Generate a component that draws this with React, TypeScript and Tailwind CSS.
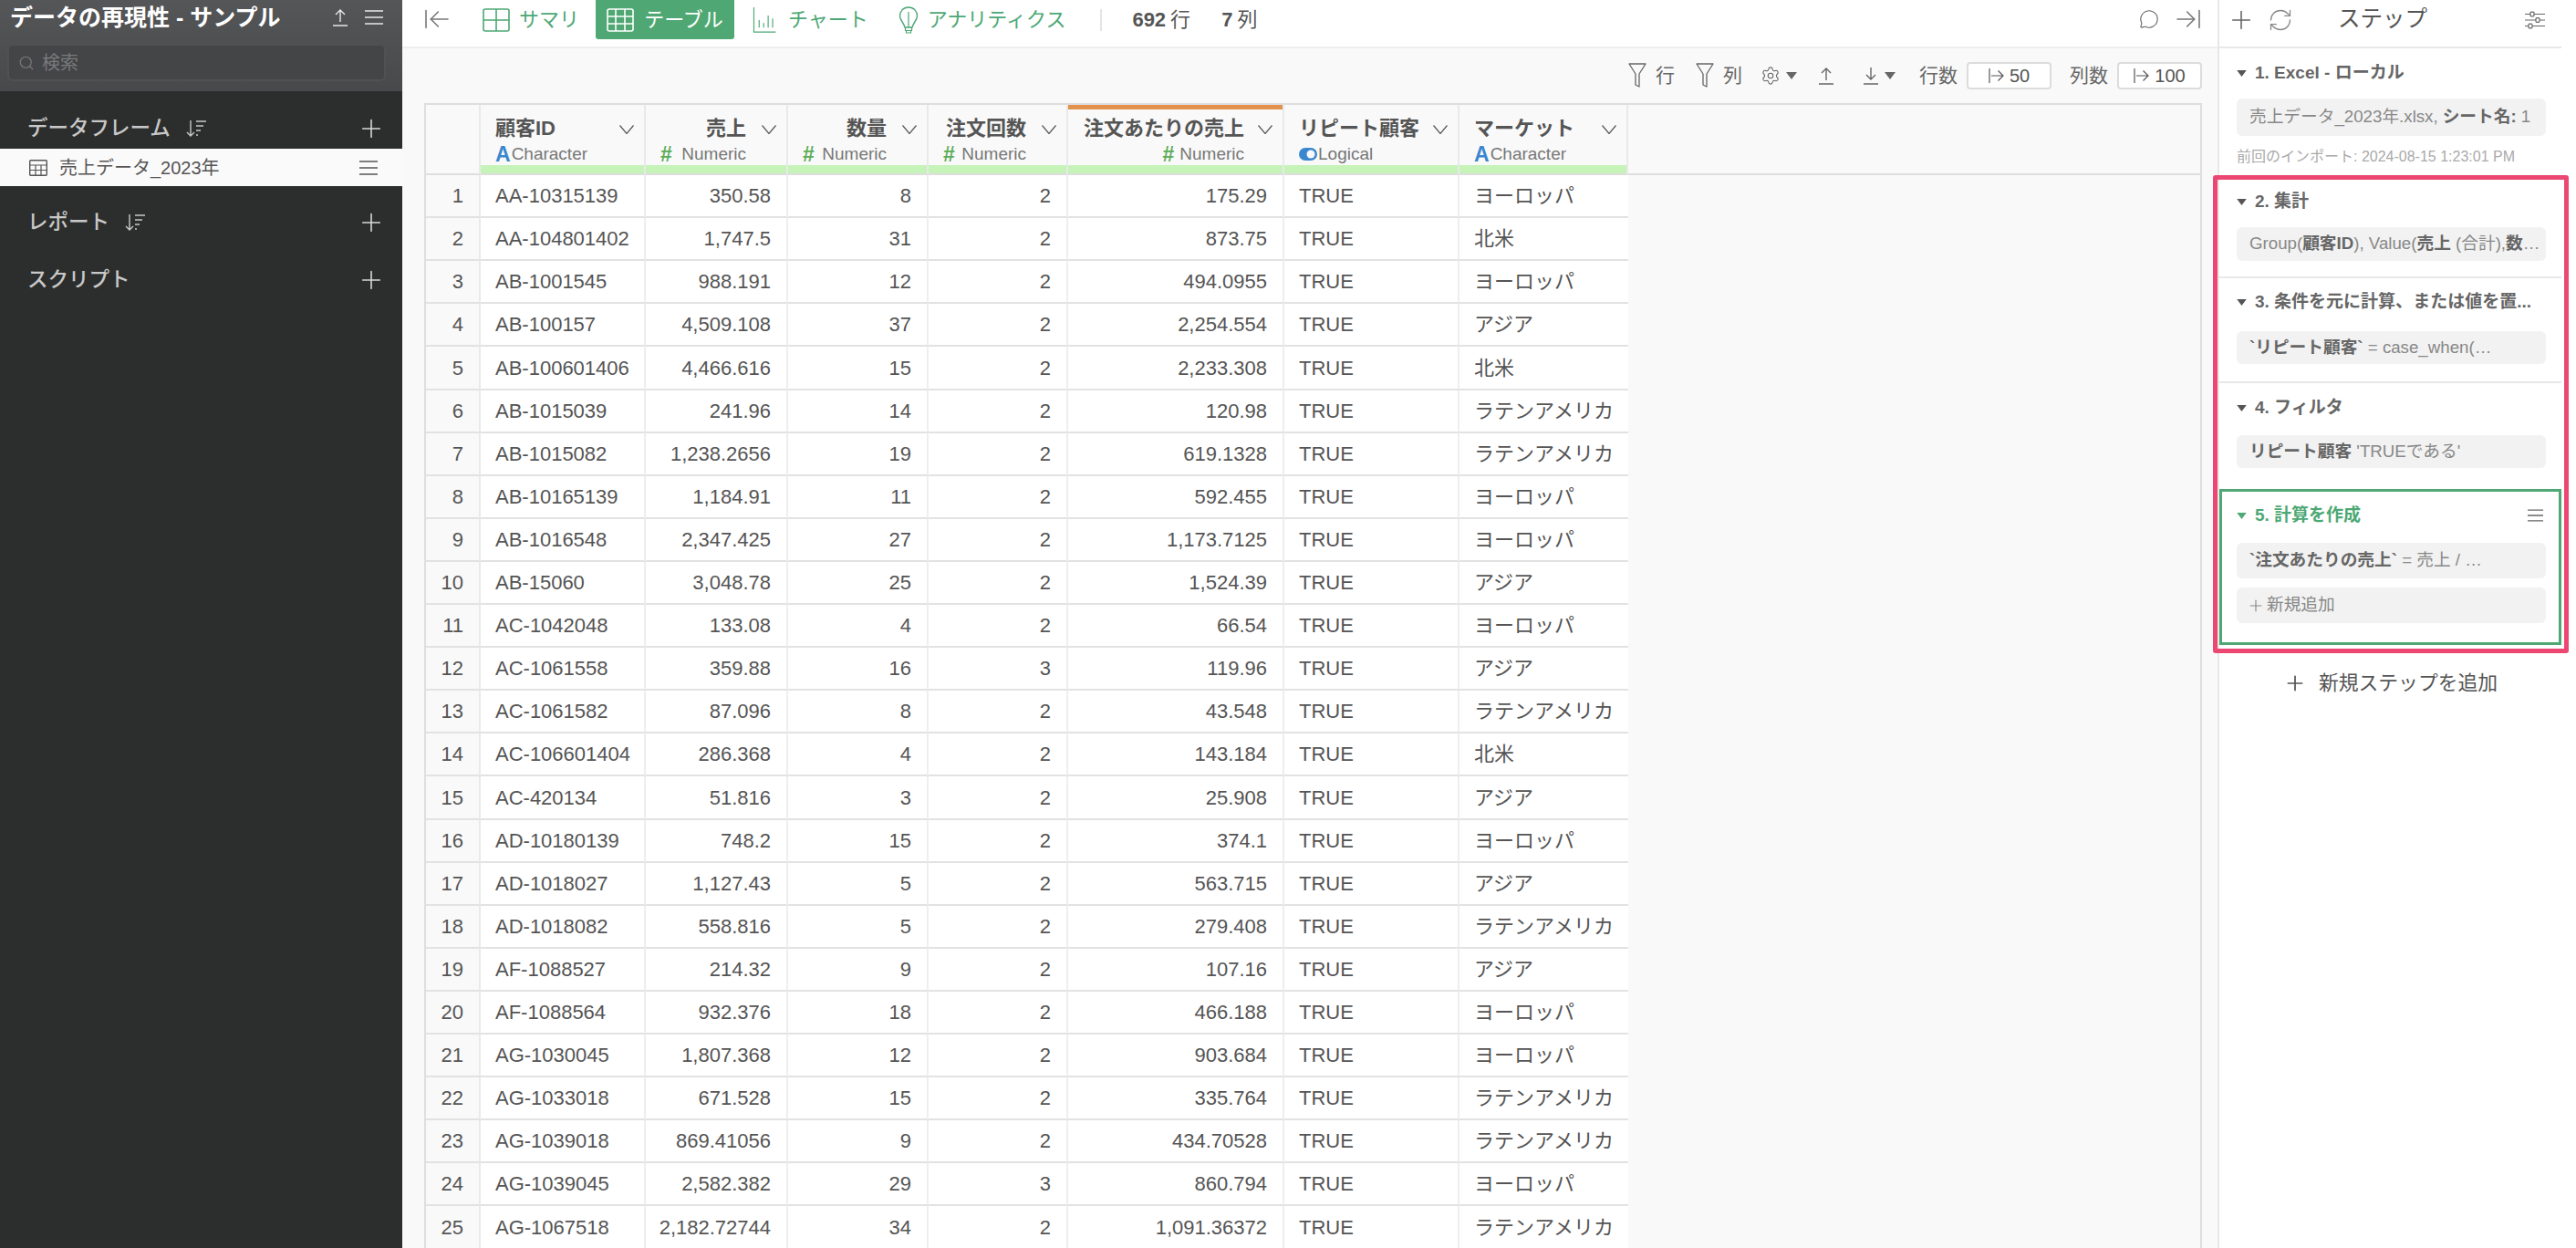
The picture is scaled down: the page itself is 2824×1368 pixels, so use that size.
import React from 'react';
import { ArrowLeftToLine, ArrowRightToLine, MessageCircle, Plus, RefreshCw, Search, Settings } from 'lucide-react';

const rows: [string, string, string, string, string, string][] = [
  ['AA-10315139', '350.58', '8', '2', '175.29', 'ヨーロッパ'],
  ['AA-104801402', '1,747.5', '31', '2', '873.75', '北米'],
  ['AB-1001545', '988.191', '12', '2', '494.0955', 'ヨーロッパ'],
  ['AB-100157', '4,509.108', '37', '2', '2,254.554', 'アジア'],
  ['AB-100601406', '4,466.616', '15', '2', '2,233.308', '北米'],
  ['AB-1015039', '241.96', '14', '2', '120.98', 'ラテンアメリカ'],
  ['AB-1015082', '1,238.2656', '19', '2', '619.1328', 'ラテンアメリカ'],
  ['AB-10165139', '1,184.91', '11', '2', '592.455', 'ヨーロッパ'],
  ['AB-1016548', '2,347.425', '27', '2', '1,173.7125', 'ヨーロッパ'],
  ['AB-15060', '3,048.78', '25', '2', '1,524.39', 'アジア'],
  ['AC-1042048', '133.08', '4', '2', '66.54', 'ヨーロッパ'],
  ['AC-1061558', '359.88', '16', '3', '119.96', 'アジア'],
  ['AC-1061582', '87.096', '8', '2', '43.548', 'ラテンアメリカ'],
  ['AC-106601404', '286.368', '4', '2', '143.184', '北米'],
  ['AC-420134', '51.816', '3', '2', '25.908', 'アジア'],
  ['AD-10180139', '748.2', '15', '2', '374.1', 'ヨーロッパ'],
  ['AD-1018027', '1,127.43', '5', '2', '563.715', 'アジア'],
  ['AD-1018082', '558.816', '5', '2', '279.408', 'ラテンアメリカ'],
  ['AF-1088527', '214.32', '9', '2', '107.16', 'アジア'],
  ['AF-1088564', '932.376', '18', '2', '466.188', 'ヨーロッパ'],
  ['AG-1030045', '1,807.368', '12', '2', '903.684', 'ヨーロッパ'],
  ['AG-1033018', '671.528', '15', '2', '335.764', 'ラテンアメリカ'],
  ['AG-1039018', '869.41056', '9', '2', '434.70528', 'ラテンアメリカ'],
  ['AG-1039045', '2,582.382', '29', '3', '860.794', 'ヨーロッパ'],
  ['AG-1067518', '2,182.72744', '34', '2', '1,091.36372', 'ラテンアメリカ'],
];

const MenuLines = ({ className }: { className?: string }) => (
  <svg viewBox="0 0 20 16" className={className} fill="none" stroke="currentColor" strokeWidth="1.5">
    <path d="M0 1h20M0 8h20M0 15h20" />
  </svg>
);

const UpTray = ({ className }: { className?: string }) => (
  <svg viewBox="0 0 16 20" className={className} fill="none" stroke="currentColor" strokeWidth="1.4">
    <path d="M8 15V2M3 7l5-5 5 5M0 19h16" />
  </svg>
);

const DownTray = ({ className }: { className?: string }) => (
  <svg viewBox="0 0 16 20" className={className} fill="none" stroke="currentColor" strokeWidth="1.4">
    <path d="M8 1v13M3 9l5 5 5-5M0 19h16" />
  </svg>
);

const SortIcon = ({ className }: { className?: string }) => (
  <svg viewBox="0 0 22 20" className={className} fill="none" stroke="currentColor" strokeWidth="1.4">
    <path d="M5 1v17M1 14l4 4 4-4" />
    <path d="M11 2h11M11 7h8M11 12h5M11 17h2" />
  </svg>
);

const GridIcon = ({ className }: { className?: string }) => (
  <svg viewBox="0 0 20 18" className={className} fill="none" stroke="currentColor" strokeWidth="1.4">
    <rect x="0.7" y="0.7" width="18.6" height="16.6" rx="1" />
    <path d="M0.7 6h18.6M0.7 11.5h18.6M7 6v11.3M13 6v11.3" strokeWidth="1.2" />
  </svg>
);

const Funnel = ({ className }: { className?: string }) => (
  <svg viewBox="0 0 20 28" className={className} fill="none" stroke="currentColor" strokeWidth="1.3" strokeLinejoin="round">
    <path d="M1 1h18l-7 11v14l-4-2V12z" />
  </svg>
);

const SlidersIcon = ({ className }: { className?: string }) => (
  <svg viewBox="0 0 22 20" className={className} fill="none" stroke="currentColor" strokeWidth="1.2">
    <path d="M0 3.5h6M10 3.5h12M0 10h12M16 10h6M0 16.5h4M8 16.5h14" />
    <rect x="6" y="1.2" width="4" height="4.6" rx="1" />
    <rect x="12" y="7.7" width="4" height="4.6" rx="1" />
    <rect x="4" y="14.2" width="4" height="4.6" rx="1" />
  </svg>
);

const ChartIcon = ({ className }: { className?: string }) => (
  <svg viewBox="0 0 30 34" className={className} fill="none" stroke="currentColor" strokeWidth="1.4">
    <path d="M1 0v33h29M8 17v10M14 21v6M20 11v16M26 15v12" />
  </svg>
);

const BulbIcon = ({ className }: { className?: string }) => (
  <svg viewBox="0 0 22 30" className={className} fill="none" stroke="currentColor" strokeWidth="1.4" strokeLinejoin="round">
    <path d="M11 1C5 1 1.5 5.5 1.5 10.5c0 5 4.5 7.5 5.5 12.5h8c1-5 5.500-7.500 5.500-12.500C20.500 5.500 17 1 11 1z" />
    <path d="M7.500 23v3.500h7V23M8.500 26.500V29h5v-2.500M11 23V6" strokeWidth="1.200" />
  </svg>
);

const Caret = ({ className }: { className?: string }) => (
  <svg viewBox="0 0 12 8" className={className} fill="currentColor">
    <path d="M0 0h12L6 8z" />
  </svg>
);

const Chevron = ({ className }: { className?: string }) => (
  <svg viewBox="0 0 16 10" className={className} fill="none" stroke="currentColor" strokeWidth="1.2">
    <path d="M0.5 0.5L8 9.500L15.500 0.5" />
  </svg>
);

const LimitArrow = () => (
  <svg viewBox="0 0 17 16" className="w-[17px] h-[16px]" fill="none" stroke="currentColor" strokeWidth="1.2">
    <path d="M1 0v16M3 8h13M10.500 2.500L16 8l-5.500 5.500" />
  </svg>
);

const LogicalIcon = () => (
  <svg viewBox="0 0 20 14" className="w-[20px] h-[14px] shrink-0 mr-[1px]">
    <rect width="20" height="14" rx="7" fill="#3a87cf" />
    <circle cx="13" cy="7" r="4.5" fill="#f9f9f9" />
  </svg>
);

const TypeLabel = ({ kind, spread }: { kind: 'Character' | 'Numeric' | 'Logical'; spread?: boolean }) => (
  <div className={spread ? 'w-full flex items-center justify-between text-[19px] leading-[24px] font-normal text-[#777]' : 'flex items-center text-[19px] leading-[24px] font-normal text-[#777]'}>
    {kind === 'Character' && <span className="font-bold text-[#3a87cf] text-[23px] leading-[24px] mr-[1px]">A</span>}
    {kind === 'Numeric' && <span className="font-bold text-[#5cad58] text-[23px] leading-[24px] mr-[6px]">#</span>}
    {kind === 'Logical' && <LogicalIcon />}
    <span>{kind}</span>
  </div>
);

const HeaderCell = ({ label, kind, right, accent }: { label: string; kind: 'Character' | 'Numeric' | 'Logical'; right?: boolean; accent?: boolean }) => (
  <th className="p-0 align-top font-normal border-r-2 border-r-[#e9e9e9] border-b-2 border-b-[#dedede] bg-[#f9f9f9]">
    <div className="h-[75px] flex flex-col relative">
      <div className={accent ? 'h-[5px] bg-[#e3924e]' : 'h-[5px]'} />
      <div className={right ? (accent ? 'flex-1 flex flex-col items-end pr-[42px] pt-[6px]' : 'flex-1 flex flex-col items-end pr-[44px] pl-[16px] pt-[6px]') : 'flex-1 flex flex-col items-start pl-[16px] pt-[6px]'}>
        <div className="text-[22px] leading-[30px] font-bold text-[#555] whitespace-nowrap">{label}</div>
        <div className={right && !accent ? 'w-full pt-[1px]' : 'pt-[1px]'}>
          <TypeLabel kind={kind} spread={right && !accent} />
        </div>
      </div>
      <Chevron className="absolute top-[22px] right-[11px] w-[16px] h-[10px] text-[#555]" />
      <div className="h-[10px] bg-[#c5f3b8]" />
    </div>
  </th>
);

const StepTitle = ({ children, active }: { children: React.ReactNode; active?: boolean }) => (
  <div className={active ? 'flex items-center gap-[9px] text-[#4ca874] text-[19px] leading-[26px] font-bold whitespace-nowrap' : 'flex items-center gap-[9px] text-[#666] text-[19px] leading-[26px] font-bold whitespace-nowrap'}>
    <Caret className={active ? 'w-[11px] h-[7px] text-[#4ca874]' : 'w-[11px] h-[7px] text-[#555]'} />
    {children}
  </div>
);

const StepCard = ({ children, className }: { children: React.ReactNode; className: string }) => (
  <div className={'rounded-[6px] bg-[#f2f2f2] pl-[14px] flex items-center text-[18.7px] text-[#888] whitespace-nowrap overflow-hidden ' + className}>
    {children}
  </div>
);

export default function App() {
  return (
    <div className="w-[2824px] h-[1368px] flex overflow-hidden bg-white text-[#555] font-['Liberation_Sans','Noto_Sans_CJK_JP',sans-serif]">
      <aside className="w-[441px] shrink-0 bg-[#2c2e2d] flex flex-col">
        <div className="h-[100px] bg-gradient-to-b from-[#555658] to-[#48494b] px-[8px]">
          <div className="h-[48px] flex items-center">
            <div className="pl-[3px] text-[25px] leading-[36px] font-bold text-white whitespace-nowrap flex-1 -mt-[10px]">データの再現性 - サンプル</div>
            <UpTray className="w-[16px] h-[20px] text-[#e8e8e8] mr-[19px] -mt-[10px]" />
            <MenuLines className="w-[20px] h-[16px] text-[#e8e8e8] mr-[13px] -mt-[10px]" />
          </div>
          <div className="h-[41px] w-[415px] rounded-[6px] bg-[#444547] border-2 border-[#505153] flex items-center pl-[10px] gap-[8px] text-[20px] text-[#797a7c]">
            <Search className="w-[18px] h-[18px]" strokeWidth={1.5} />
            検索
          </div>
        </div>
        <div className="h-[63px] pl-[30px] pr-[18px] pt-[18px] flex items-center text-[#c8c8c8]">
          <span className="text-[22.5px] font-medium flex-1 flex items-center gap-[17px]">データフレーム<SortIcon className="w-[22px] h-[20px]" /></span>
          <Plus className="w-[32px] h-[32px] text-[#d8d8d8]" strokeWidth={1.2} />
        </div>
        <div className="h-[41px] bg-[#fafafa] pl-[32px] pr-[27px] flex items-center text-[#555]">
          <GridIcon className="w-[20px] h-[18px] mr-[13px]" />
          <span className="text-[20px] flex-1">売上データ_2023年</span>
          <MenuLines className="w-[20px] h-[16px]" />
        </div>
        <div className="h-[78px] pl-[30px] pr-[18px] pt-[2px] flex items-center text-[#c8c8c8]">
          <span className="text-[22.5px] font-medium flex-1 flex items-center gap-[17px]">レポート<SortIcon className="w-[22px] h-[20px]" /></span>
          <Plus className="w-[32px] h-[32px] text-[#d8d8d8]" strokeWidth={1.2} />
        </div>
        <div className="h-[48px] pl-[30px] pr-[18px] pt-[2px] flex items-center text-[#c8c8c8]">
          <span className="text-[22.5px] font-medium flex-1">スクリプト</span>
          <Plus className="w-[32px] h-[32px] text-[#d8d8d8]" strokeWidth={1.2} />
        </div>
      </aside>

      <main className="flex-1 min-w-0 flex flex-col bg-[#f9f9f9]">
        <div className="h-[53px] shrink-0 bg-white border-b-2 border-[#eeeeee] flex items-start pl-[22px] pr-[16px] text-[22px] text-[#4ca874]">
          <ArrowLeftToLine className="w-[32px] h-[32px] mt-[5px] text-[#777] mr-[34px]" strokeWidth={1.2} />
          <div className="flex items-center h-[43px] gap-[10px] mr-[18px]">
            <svg viewBox="0 0 30 26" className="w-[30px] h-[26px]" fill="none" stroke="currentColor" strokeWidth="1.6">
              <rect x="1" y="1" width="28" height="24" rx="2" />
              <path d="M15 1v24M1 13h28" />
            </svg>
            サマリ
          </div>
          <div className="h-[43px] w-[152px] bg-[#4fa873] rounded-b-[3px] flex items-center justify-center gap-[11px] text-white mr-[18px]">
            <svg viewBox="0 0 30 26" className="w-[30px] h-[26px]" fill="none" stroke="currentColor" strokeWidth="1.6">
              <rect x="1" y="1" width="28" height="24" rx="2" />
              <path d="M1 9h28M1 17h28M10 1v24M20 1v24" />
            </svg>
            テーブル
          </div>
          <div className="flex items-center h-[43px] gap-[11px] mr-[33px]">
            <ChartIcon className="w-[30px] h-[28px]" />
            チャート
          </div>
          <div className="flex items-center h-[43px] gap-[10px]">
            <BulbIcon className="w-[22px] h-[30px]" />
            アナリティクス
          </div>
          <div className="w-[2px] h-[24px] bg-[#e4e4e4] mt-[10px] ml-[38px] mr-[33px]" />
          <div className="h-[43px] flex items-center text-[#555]">
            <b className="mr-[5px]">692</b>行<b className="ml-[34px] mr-[5px]">7</b>列
          </div>
          <div className="flex-1" />
          <MessageCircle className="w-[22px] h-[22px] mt-[10px] text-[#666] mr-[16px]" strokeWidth={1.2} />
          <ArrowRightToLine className="w-[32px] h-[32px] mt-[5px] text-[#777]" strokeWidth={1.2} />
        </div>

        <div className="h-[60px] shrink-0 flex items-center justify-end pr-[17px] text-[21px] text-[#666]">
          <Funnel className="w-[20px] h-[28px] mr-[10px]" />
          <span className="mr-[23px]">行</span>
          <Funnel className="w-[20px] h-[28px] mr-[10px]" />
          <span className="mr-[20px]">列</span>
          <Settings className="w-[22px] h-[24px] mr-[6px]" strokeWidth={1.2} />
          <Caret className="w-[12px] h-[8px] mr-[24px]" />
          <UpTray className="w-[16px] h-[20px] mr-[33px]" />
          <DownTray className="w-[16px] h-[20px] mr-[7px]" />
          <Caret className="w-[12px] h-[8px] mr-[26px]" />
          <span className="mr-[10px]">行数</span>
          <div className="w-[93px] h-[30px] mr-[20px] rounded-[4px] border-2 border-[#dcdcdc] bg-white flex items-center justify-center gap-[6px] text-[20px] text-[#555]">
            <LimitArrow />50
          </div>
          <span className="mr-[10px]">列数</span>
          <div className="w-[93px] h-[30px] rounded-[4px] border-2 border-[#dcdcdc] bg-white flex items-center justify-center gap-[6px] text-[20px] text-[#555]">
            <LimitArrow />100
          </div>
        </div>

        <div className="flex-1 min-h-0 ml-[24px] mr-[17px] border-2 border-b-0 border-[#dedede] overflow-hidden">
          <table className="table-fixed w-full border-separate border-spacing-0 text-[22px] text-[#555]">
            <colgroup>
              <col className="w-[60px]" />
              <col className="w-[181px]" />
              <col className="w-[156px]" />
              <col className="w-[154px]" />
              <col className="w-[153px]" />
              <col className="w-[237px]" />
              <col className="w-[192px]" />
              <col className="w-[185px]" />
              <col />
            </colgroup>
            <thead>
              <tr>
                <th className="p-0 bg-[#f9f9f9] border-r-2 border-r-[#e9e9e9] border-b-2 border-b-[#dedede]" />
                <HeaderCell label="顧客ID" kind="Character" />
                <HeaderCell label="売上" kind="Numeric" right />
                <HeaderCell label="数量" kind="Numeric" right />
                <HeaderCell label="注文回数" kind="Numeric" right />
                <HeaderCell label="注文あたりの売上" kind="Numeric" right accent />
                <HeaderCell label="リピート顧客" kind="Logical" />
                <HeaderCell label="マーケット" kind="Character" />
                <th className="p-0 border-b-2 border-b-[#dedede]" />
              </tr>
            </thead>
            <tbody>
              {rows.map((r, i) => (
                // table rows snap to whole pixels, every 10th one takes up the 47.1px pitch
                <tr key={r[0]} className={i % 10 === 4 ? 'h-[48px]' : 'h-[47px]'}>
                  <td className="p-0 pr-[17px] text-right bg-[#f9f9f9] border-r-2 border-r-[#e9e9e9] border-b-2 border-b-[#e2e2e2]">{i + 1}</td>
                  <td className="p-0 pl-[16px] bg-white border-r-2 border-r-[#eeeeee] border-b-2 border-b-[#e2e2e2]">{r[0]}</td>
                  <td className="p-0 pr-[17px] text-right bg-white border-r-2 border-r-[#eeeeee] border-b-2 border-b-[#e2e2e2]">{r[1]}</td>
                  <td className="p-0 pr-[17px] text-right bg-white border-r-2 border-r-[#eeeeee] border-b-2 border-b-[#e2e2e2]">{r[2]}</td>
                  <td className="p-0 pr-[17px] text-right bg-white border-r-2 border-r-[#eeeeee] border-b-2 border-b-[#e2e2e2]">{r[3]}</td>
                  <td className="p-0 pr-[17px] text-right bg-white border-r-2 border-r-[#eeeeee] border-b-2 border-b-[#e2e2e2]">{r[4]}</td>
                  <td className="p-0 pl-[16px] bg-white border-r-2 border-r-[#eeeeee] border-b-2 border-b-[#e2e2e2]">TRUE</td>
                  <td className="p-0 pl-[16px] bg-white border-b-2 border-b-[#e2e2e2]">{r[5]}</td>
                </tr>
              ))}
            </tbody>
          </table>
        </div>
      </main>

      <aside className="w-[393px] shrink-0 border-l-2 border-[#e8e8e8] bg-white relative">
        <div className="w-[375px]">
          <div className="h-[53px] border-b-2 border-[#e8e8e8] flex items-center pl-[8px] pr-[18px] pb-[8px] text-[#666]">
            <Plus className="w-[32px] h-[32px]" strokeWidth={1.2} />
            <RefreshCw className="w-[28px] h-[28px] ml-[13px] text-[#888]" strokeWidth={1.1} />
            <span className="text-[24.5px] ml-[49px] flex-1 text-[#555]">ステップ</span>
            <SlidersIcon className="w-[22px] h-[20px]" />
          </div>

          <div className="h-[139px] pl-[19px] pr-[17px] pt-[14px]">
            <StepTitle>1. Excel - ローカル</StepTitle>
            <StepCard className="h-[41px] mt-[15px]">売上データ_2023年.xlsx, <b className="text-[#666] ml-[5px]">シート名:</b>&nbsp;1</StepCard>
            <div className="text-[16px] leading-[20px] mt-[13px] text-[#aaa] whitespace-nowrap">前回のインポート: 2024-08-15 1:23:01 PM</div>
          </div>

          <div className="h-[113px] pl-[19px] pr-[17px] pt-[16px] border-b-2 border-[#e8e8e8]">
            <StepTitle>2. 集計</StepTitle>
            <StepCard className="h-[37px] mt-[15px]">Group(<b className="text-[#666]">顧客ID</b>), Value(<b className="text-[#666]">売上</b>&nbsp;(合計),<b className="text-[#666]">数</b>…</StepCard>
          </div>

          <div className="h-[115px] pl-[19px] pr-[17px] pt-[13px] border-b-2 border-[#e8e8e8]">
            <StepTitle>3. 条件を元に計算、または値を置...</StepTitle>
            <StepCard className="h-[36px] mt-[19px]"><b className="text-[#666]">`リピート顧客`</b>&nbsp;= case_when(…</StepCard>
          </div>

          <div className="h-[116px] pl-[19px] pr-[17px] pt-[14px]">
            <StepTitle>4. フィルタ</StepTitle>
            <StepCard className="h-[36px] mt-[17px]"><b className="text-[#666]">リピート顧客</b>&nbsp;'TRUEである'</StepCard>
          </div>

          <div className="h-[171px] pl-[16px] pr-[14px] pt-[13px] border-[3px] border-[#4fa873]">
            <div className="flex items-center justify-between">
              <StepTitle active>5. 計算を作成</StepTitle>
              <MenuLines className="w-[17px] h-[14px] text-[#666] mr-[3px]" />
            </div>
            <StepCard className="h-[39px] mt-[17px]"><b className="text-[#666]">`注文あたりの売上`</b>&nbsp;= 売上 / …</StepCard>
            <StepCard className="h-[39px] mt-[10px]"><Plus className="w-[20px] h-[20px] -ml-[3px] mr-[2px]" strokeWidth={1.4} />新規追加</StepCard>
          </div>

          <div className="mt-[26px] flex items-center justify-center gap-[13px] text-[21.8px] text-[#555]">
            <Plus className="w-[26px] h-[26px]" strokeWidth={1.6} />
            新規ステップを追加
          </div>
        </div>

        <div className="absolute left-[-7px] top-[192px] w-[390px] h-[524px] rounded-[3px] border-[5px] border-[#ec4672] pointer-events-none" />
      </aside>
    </div>
  );
}
